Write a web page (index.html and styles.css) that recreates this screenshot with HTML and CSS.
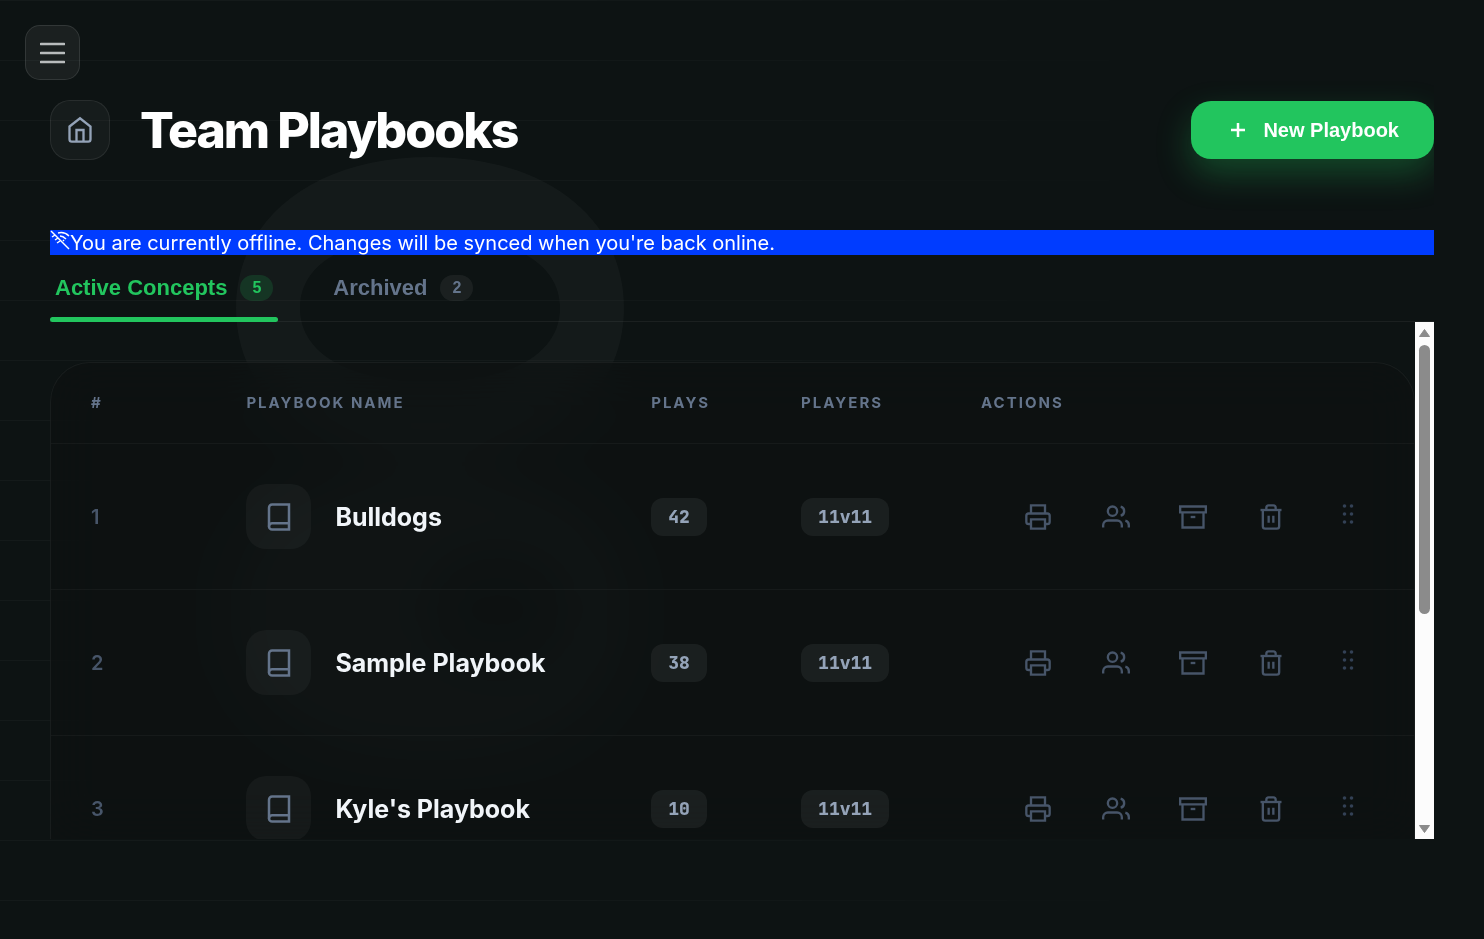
FILE: index.html
```html
<!DOCTYPE html>
<html lang="en">
<head>
    <meta charset="UTF-8">
    <meta name="viewport" content="width=device-width, initial-scale=1.0">
    <title>Team Playbooks</title>
    <link rel="stylesheet" href="styles.css">
</head>
<body>
    <!-- Icon sprite -->
    <svg class="sprite" aria-hidden="true">
        <symbol id="icon-book" viewBox="0 0 24 24">
            <path d="M4 19.5A2.5 2.5 0 0 1 6.5 17H20"/>
            <path d="M6.5 2H20v20H6.5A2.5 2.5 0 0 1 4 19.5v-15A2.5 2.5 0 0 1 6.5 2z"/>
        </symbol>
        <symbol id="icon-printer" viewBox="0 0 24 24">
            <path d="M6 9V2h12v7"/>
            <path d="M6 18H4a2 2 0 0 1-2-2v-5a2 2 0 0 1 2-2h16a2 2 0 0 1 2 2v5a2 2 0 0 1-2 2h-2"/>
            <path d="M6 14h12v8H6z"/>
        </symbol>
        <symbol id="icon-users" viewBox="0 0 24 24">
            <path d="M17 21v-2a4 4 0 0 0-4-4H5a4 4 0 0 0-4 4v2"/>
            <circle cx="9" cy="7" r="4"/>
            <path d="M23 21v-2a4 4 0 0 0-3-3.87"/>
            <path d="M16 3.13a4 4 0 0 1 0 7.75"/>
        </symbol>
        <symbol id="icon-archive" viewBox="0 0 24 24">
            <path d="M21 8v13H3V8"/>
            <path d="M1 3h22v5H1z"/>
            <path d="M10 12h4"/>
        </symbol>
        <symbol id="icon-trash" viewBox="0 0 24 24">
            <path d="M3 6h18"/>
            <path d="M19 6v14a2 2 0 0 1-2 2H7a2 2 0 0 1-2-2V6m3 0V4a2 2 0 0 1 2-2h4a2 2 0 0 1 2 2v2"/>
            <path d="M10 11v6M14 11v6"/>
        </symbol>
        <symbol id="icon-grip" viewBox="0 0 28 28">
            <circle cx="10.5" cy="3" r="1.8"/><circle cx="17.5" cy="3" r="1.8"/>
            <circle cx="10.5" cy="11" r="1.8"/><circle cx="17.5" cy="11" r="1.8"/>
            <circle cx="10.5" cy="19" r="1.8"/><circle cx="17.5" cy="19" r="1.8"/>
        </symbol>
    </svg>

    <div class="field-lines"></div>
    <svg class="watermark" viewBox="0 0 660 800" aria-hidden="true">
        <path fill-rule="evenodd" d="M430 157C548 157 624 220 624 308C624 396 548 460 430 460C312 460 236 396 236 308C236 220 312 157 430 157ZM430 235C350 235 300 262 300 308C300 354 350 382 430 382C510 382 560 354 560 308C560 262 510 235 430 235Z"/>
        <path fill-rule="evenodd" d="M430 470C560 470 630 520 630 610C630 705 560 760 430 760C300 760 230 705 230 610C230 520 300 470 430 470ZM497 555C455 555 430 575 430 610C430 645 455 665 497 665C540 665 565 645 565 610C565 575 540 555 497 555Z"/>
    </svg>

    <div class="page">
        <nav class="menu-bar">
            <button class="menu-btn" aria-label="Open menu">
                <svg viewBox="0 0 25 22"><path d="M1 2h23M1 11h23M1 20h23"/></svg>
            </button>
        </nav>

        <main class="container">
            <header class="page-header">
                <a href="/" class="home-btn" aria-label="Home">
                    <svg class="icon" viewBox="0 0 24 24">
                        <path d="M3 9l9-7 9 7v11a2 2 0 0 1-2 2H5a2 2 0 0 1-2-2z"/>
                        <path d="M9 22V12h6v10"/>
                    </svg>
                </a>
                <h1>Team Playbooks</h1>
                <button class="btn-new">
                    <svg viewBox="0 0 24 24"><path d="M12 5v14M5 12h14"/></svg>
                    New Playbook
                </button>
            </header>

            <div class="offline-banner" role="status">
                <svg viewBox="0 0 20 20">
                    <path d="M1 1l18 18"/>
                    <path d="M2 7l3-2M5 10l3-2M7 13l3-2"/>
                    <path d="M8 3c4-1 8 0 11 3M10 6c2 0 4 1 6 3M13 10l1 1"/>
                </svg>
                <span>You are currently offline. Changes will be synced when you're back online.</span>
            </div>

            <div class="tabs" role="tablist">
                <button class="tab active" role="tab" aria-selected="true">Active Concepts <span class="count">5</span></button>
                <button class="tab" role="tab" aria-selected="false">Archived <span class="count">2</span></button>
            </div>

            <div class="list-area">
                <div class="list-scroll">
                    <div class="table-card">
                        <table>
                            <colgroup>
                                <col class="col-num">
                                <col class="col-name">
                                <col class="col-plays">
                                <col class="col-players">
                                <col class="col-actions">
                            </colgroup>
                            <thead>
                                <tr>
                                    <th>#</th>
                                    <th>PLAYBOOK NAME</th>
                                    <th>PLAYS</th>
                                    <th>PLAYERS</th>
                                    <th>ACTIONS</th>
                                </tr>
                            </thead>
                            <tbody>
                                <tr>
                                    <td class="num">1</td>
                                    <td>
                                        <div class="playbook">
                                            <span class="book"><svg class="icon"><use href="#icon-book"/></svg></span>
                                            <span>Bulldogs</span>
                                        </div>
                                    </td>
                                    <td><span class="badge">42</span></td>
                                    <td><span class="badge">11v11</span></td>
                                    <td>
                                        <div class="row-actions">
                                            <button aria-label="Print"><svg class="icon"><use href="#icon-printer"/></svg></button>
                                            <button aria-label="Share"><svg class="icon"><use href="#icon-users"/></svg></button>
                                            <button aria-label="Archive"><svg class="icon"><use href="#icon-archive"/></svg></button>
                                            <button aria-label="Delete"><svg class="icon"><use href="#icon-trash"/></svg></button>
                                            <button class="grip" aria-label="Reorder"><svg class="icon"><use href="#icon-grip"/></svg></button>
                                        </div>
                                    </td>
                                </tr>
                                <tr>
                                    <td class="num">2</td>
                                    <td>
                                        <div class="playbook">
                                            <span class="book"><svg class="icon"><use href="#icon-book"/></svg></span>
                                            <span>Sample Playbook</span>
                                        </div>
                                    </td>
                                    <td><span class="badge">38</span></td>
                                    <td><span class="badge">11v11</span></td>
                                    <td>
                                        <div class="row-actions">
                                            <button aria-label="Print"><svg class="icon"><use href="#icon-printer"/></svg></button>
                                            <button aria-label="Share"><svg class="icon"><use href="#icon-users"/></svg></button>
                                            <button aria-label="Archive"><svg class="icon"><use href="#icon-archive"/></svg></button>
                                            <button aria-label="Delete"><svg class="icon"><use href="#icon-trash"/></svg></button>
                                            <button class="grip" aria-label="Reorder"><svg class="icon"><use href="#icon-grip"/></svg></button>
                                        </div>
                                    </td>
                                </tr>
                                <tr>
                                    <td class="num">3</td>
                                    <td>
                                        <div class="playbook">
                                            <span class="book"><svg class="icon"><use href="#icon-book"/></svg></span>
                                            <span>Kyle's Playbook</span>
                                        </div>
                                    </td>
                                    <td><span class="badge">10</span></td>
                                    <td><span class="badge">11v11</span></td>
                                    <td>
                                        <div class="row-actions">
                                            <button aria-label="Print"><svg class="icon"><use href="#icon-printer"/></svg></button>
                                            <button aria-label="Share"><svg class="icon"><use href="#icon-users"/></svg></button>
                                            <button aria-label="Archive"><svg class="icon"><use href="#icon-archive"/></svg></button>
                                            <button aria-label="Delete"><svg class="icon"><use href="#icon-trash"/></svg></button>
                                            <button class="grip" aria-label="Reorder"><svg class="icon"><use href="#icon-grip"/></svg></button>
                                        </div>
                                    </td>
                                </tr>
                            </tbody>
                        </table>
                    </div>
                </div>
                <div class="scrollbar" aria-hidden="true">
                    <svg viewBox="0 0 13 10"><path d="M6.5 1.5L11.5 8.5H1.5z"/></svg>
                    <div class="track"><div class="thumb"></div></div>
                    <svg viewBox="0 0 13 10"><path d="M1.5 1.5H11.5L6.5 8.5z"/></svg>
                </div>
            </div>
        </main>
    </div>
</body>
</html>
```
FILE: styles.css
```css
* {
    box-sizing: border-box;
}
body {
    margin: 0;
    background: #0d1313;
    color: #f1f5f9;
    font-family: Inter, 'Segoe UI', sans-serif;
    font-size: 20px;
    overflow: hidden;
}
button {
    padding: 0;
    border: none;
    background: none;
    color: inherit;
    font-family: 'Liberation Sans', Arial, sans-serif;
    cursor: pointer;
}
h1 {
    margin: 0;
    color: white;
    font-size: 50px;
    font-weight: 800;
    line-height: 60px;
    letter-spacing: -2px;
}
.sprite {
    display: none;
}
.icon {
    width: 28px;
    height: 28px;
    fill: none;
    stroke: currentColor;
    stroke-width: 2;
}

/* Background */
.field-lines {
    position: fixed;
    inset: 0;
    z-index: -1;
    background: repeating-linear-gradient(to bottom, rgba(255, 255, 255, 0.03) 0 1px, transparent 1px 60px);
    mask-image: linear-gradient(to right, black 30%, transparent 85%);
}
.watermark {
    position: fixed;
    top: 0;
    left: 0;
    z-index: -1;
    width: 660px;
    height: 800px;
    fill: rgba(255, 255, 255, 0.03);
}

/* Layout */
.page {
    display: flex;
    flex-direction: column;
    height: 100vh;
    padding-bottom: 100px;
}
.menu-bar {
    padding: 25px 25px 20px;
}
.menu-btn {
    display: flex;
    align-items: center;
    justify-content: center;
    width: 55px;
    height: 55px;
    border: 1px solid rgba(255, 255, 255, 0.1);
    border-radius: 15px;
    background: rgba(255, 255, 255, 0.06);
}
.menu-btn svg {
    width: 25px;
    height: 22px;
    stroke: #b9bcbd;
    stroke-width: 2.6;
    stroke-linecap: round;
}
.container {
    display: flex;
    flex: 1;
    flex-direction: column;
    min-height: 0;
    margin: 0 50px;
}
.page-header {
    display: flex;
    align-items: center;
    gap: 30px;
    margin-bottom: 70px;
}
.home-btn {
    display: flex;
    align-items: center;
    justify-content: center;
    width: 60px;
    height: 60px;
    border: 1px solid rgba(255, 255, 255, 0.08);
    border-radius: 20px;
    background: rgba(255, 255, 255, 0.04);
    color: #94a3b8;
}
.btn-new {
    display: flex;
    align-items: center;
    gap: 13px;
    height: 58px;
    margin-left: auto;
    padding: 0 35px;
    border-radius: 20px;
    background: #22c55e;
    box-shadow: 0 15px 35px rgba(34, 197, 94, 0.3);
    clip-path: inset(-20px 0 -60px -60px);
    color: white;
    font-size: 20px;
    font-weight: 700;
}
.btn-new svg {
    width: 24px;
    height: 24px;
    stroke: white;
    stroke-width: 2.5;
}
.offline-banner {
    display: flex;
    height: 25px;
    background: #003cff;
    color: white;
    line-height: 27px;
}
.offline-banner svg {
    width: 20px;
    height: 20px;
    fill: none;
    stroke: white;
    stroke-width: 1.5;
}

/* Tabs */
.tabs {
    display: flex;
    gap: 50px;
    border-bottom: 1px solid rgba(255, 255, 255, 0.06);
}
.tab {
    position: relative;
    display: flex;
    align-items: center;
    gap: 13px;
    height: 67px;
    margin-bottom: -1px;
    padding: 0 5px 2px;
    color: #64748b;
    font-size: 22px;
    font-weight: 700;
}
.tab.active {
    color: #22c55e;
}
.tab.active::after {
    content: '';
    position: absolute;
    right: 0;
    bottom: 0;
    left: 0;
    height: 5px;
    border-radius: 3px;
    background: #22c55e;
}
.count {
    padding: 0 12px;
    border-radius: 13px;
    background: rgba(255, 255, 255, 0.06);
    font-size: 16px;
    line-height: 26px;
}
.active .count {
    background: rgba(34, 197, 94, 0.16);
}

/* Playbook list */
.list-area {
    display: flex;
    flex: 1;
    min-height: 0;
}
.list-scroll {
    flex: 1;
    padding-top: 40px;
    overflow-y: auto;
    scrollbar-width: none;
}
.table-card {
    border: 1px solid rgba(255, 255, 255, 0.05);
    border-radius: 40px;
    background: rgba(13, 16, 17, 0.6);
    backdrop-filter: blur(25px);
}
table {
    width: 100%;
    border-collapse: separate;
    border-spacing: 0;
    table-layout: fixed;
}
.col-num {
    width: 11.4%;
}
.col-name {
    width: 29.7%;
}
.col-plays {
    width: 11%;
}
.col-players {
    width: 13.2%;
}
th, td {
    text-align: left;
    border-bottom: 1px solid rgba(255, 255, 255, 0.04);
}
th {
    padding: 30px 40px;
    color: #64748b;
    font-size: 15px;
    font-weight: 700;
    line-height: 20px;
    letter-spacing: 2px;
    white-space: nowrap;
}
td {
    padding: 40px;
}
.num {
    color: #475569;
    font-weight: 600;
}
.playbook {
    display: flex;
    align-items: center;
    gap: 24px;
    font-size: 25px;
    font-weight: 700;
    white-space: nowrap;
}
.book {
    display: flex;
    align-items: center;
    justify-content: center;
    width: 65px;
    height: 65px;
    border-radius: 20px;
    background: rgba(255, 255, 255, 0.04);
    color: #64748b;
}
.book .icon {
    width: 30px;
    height: 30px;
}
.badge {
    display: inline-block;
    padding: 0 17px;
    border-radius: 12px;
    background: rgba(255, 255, 255, 0.06);
    color: #94a3b8;
    font-family: 'JetBrains Mono', 'DejaVu Sans Mono', monospace;
    font-size: 18px;
    font-weight: 800;
    line-height: 38px;
    vertical-align: middle;
}
.row-actions {
    display: flex;
    justify-content: space-between;
    width: 362px;
    margin-left: auto;
}
.row-actions button {
    display: flex;
    align-items: center;
    justify-content: center;
    width: 52px;
    height: 52px;
    color: #475569;
}
.row-actions .grip {
    color: #334155;
}
.grip .icon {
    fill: currentColor;
    stroke: none;
}

/* Scrollbar */
.scrollbar {
    display: flex;
    flex-direction: column;
    align-items: center;
    width: 19px;
    padding: 6px 0 5px;
    background: #fcfcfc;
}
.scrollbar svg {
    width: 13px;
    height: 10px;
    fill: #8b8b8b;
    stroke: #8b8b8b;
    stroke-linejoin: round;
}
.track {
    flex: 1;
    width: 11px;
    padding: 7px 0;
}
.thumb {
    height: 57%;
    border-radius: 6px;
    background: #8b8b8b;
}
```
